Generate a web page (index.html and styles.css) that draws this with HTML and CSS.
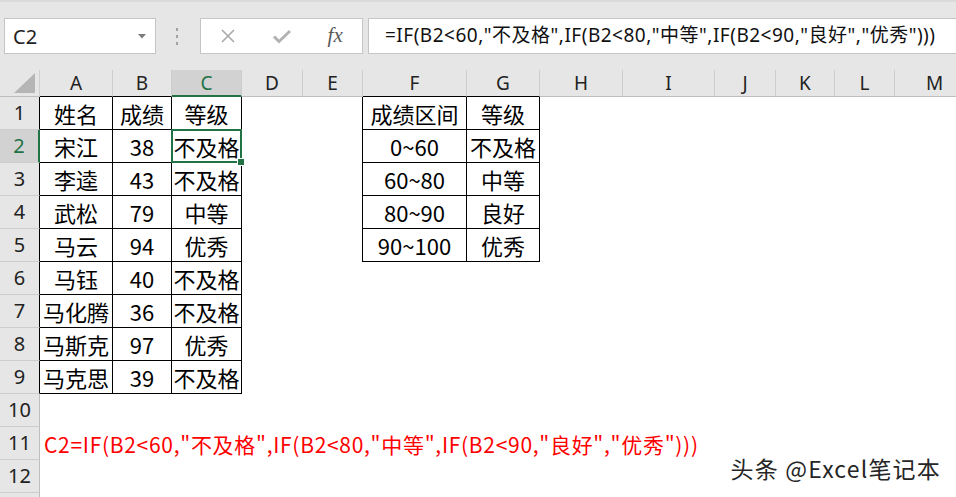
FILE: index.html
```html
<!DOCTYPE html>
<html lang="zh-CN">
<head>
  <meta charset="UTF-8" />
  <title>IF 函数 成绩等级</title>
  <link rel="stylesheet" href="styles.css">
</head>
<body>
  <div class="page">
    <div class="toolbar">
      <div class="namebox">
        <span>C2</span>
        <svg class="caret" width="8" height="5" viewBox="0 0 8 5"><path d="M0 0h8L4 4.5z" fill="#7b7b7b"/></svg>
      </div>
      <div class="grip"><i></i><i></i><i></i></div>
      <div class="fxbtns">
        <span class="fxbtn">
          <svg width="16" height="16" viewBox="0 0 16 16"><path d="M2 2l12 12M14 2L2 14" stroke="#a9a9a9" stroke-width="1.6" fill="none"/></svg>
        </span>
        <span class="fxbtn">
          <svg width="20" height="16" viewBox="0 0 20 16"><path d="M2 8.5l5 5L18 3" stroke="#b3b3b3" stroke-width="3" fill="none"/></svg>
        </span>
        <span class="fxbtn fx">fx</span>
      </div>
      <div class="formula">=IF(B2&lt;60,"不及格",IF(B2&lt;80,"中等",IF(B2&lt;90,"良好","优秀")))</div>
    </div>

    <table class="sheet">
      <colgroup>
        <col style="width:40px"><col style="width:73px"><col style="width:59px"><col style="width:70px">
        <col style="width:61px"><col style="width:60px"><col style="width:104px"><col style="width:73px">
        <col style="width:83px"><col style="width:92px"><col style="width:61px"><col style="width:59px">
        <col style="width:60px"><col style="width:80px">
      </colgroup>
      <tr class="hdr">
        <th class="corner"><svg width="21" height="20" viewBox="0 0 21 20"><path d="M21 0V20H0z" fill="#b5b5b5"/></svg></th>
        <th class="ch top">A</th><th class="ch top">B</th><th class="ch sel">C</th>
        <th class="ch">D</th><th class="ch">E</th><th class="ch top">F</th><th class="ch top">G</th>
        <th class="ch">H</th><th class="ch">I</th><th class="ch">J</th><th class="ch">K</th>
        <th class="ch">L</th><th class="ch">M</th>
      </tr>
      <tr>
        <th class="rh edge">1</th><td class="b">姓名</td><td class="b">成绩</td><td class="b">等级</td>
        <td></td><td class="bl"></td><td class="b">成绩区间</td><td class="b">等级</td>
      </tr>
      <tr>
        <th class="rh sel">2</th><td class="b">宋江</td><td class="b">38</td>
        <td class="b active">不及格<span class="cursor"><i></i></span></td>
        <td></td><td class="bl"></td><td class="b">0~60</td><td class="b">不及格</td>
      </tr>
      <tr>
        <th class="rh edge">3</th><td class="b">李逵</td><td class="b">43</td><td class="b">不及格</td>
        <td></td><td class="bl"></td><td class="b">60~80</td><td class="b">中等</td>
      </tr>
      <tr>
        <th class="rh edge">4</th><td class="b">武松</td><td class="b">79</td><td class="b">中等</td>
        <td></td><td class="bl"></td><td class="b">80~90</td><td class="b">良好</td>
      </tr>
      <tr>
        <th class="rh edge">5</th><td class="b">马云</td><td class="b">94</td><td class="b">优秀</td>
        <td></td><td class="bl"></td><td class="b">90~100</td><td class="b">优秀</td>
      </tr>
      <tr>
        <th class="rh edge">6</th><td class="b">马钰</td><td class="b">40</td><td class="b">不及格</td>
      </tr>
      <tr>
        <th class="rh edge">7</th><td class="b">马化腾</td><td class="b">36</td><td class="b">不及格</td>
      </tr>
      <tr>
        <th class="rh edge">8</th><td class="b">马斯克</td><td class="b">97</td><td class="b">优秀</td>
      </tr>
      <tr>
        <th class="rh edge">9</th><td class="b">马克思</td><td class="b">39</td><td class="b">不及格</td>
      </tr>
      <tr>
        <th class="rh">10</th><td></td>
      </tr>
      <tr>
        <th class="rh">11</th><td class="note">C2=IF(B2&lt;60,"不及格",IF(B2&lt;80,"中等",IF(B2&lt;90,"良好","优秀")))</td>
      </tr>
      <tr>
        <th class="rh">12</th><td></td>
      </tr>
      <tr>
        <th class="rh"></th><td></td>
      </tr>
    </table>

    <div class="watermark">头条 @Excel笔记本</div>
  </div>
</body>
</html>
```

FILE: styles.css
```css
body {
  margin: 0;
  background: #fff;
  font-family: "Noto Sans CJK SC", sans-serif;
}
.page {
  position: relative;
  width: 956px;
  height: 497px;
  overflow: hidden;
}

/* formula bar */
.toolbar {
  display: flex;
  align-items: flex-start;
  height: 70px;
  box-sizing: border-box;
  padding-top: 16px;
  background: #e6e6e6;
  border-top: 2px solid #dadada;
}
.namebox {
  display: flex;
  align-items: center;
  justify-content: space-between;
  width: 152px;
  height: 36px;
  box-sizing: border-box;
  margin-left: 4px;
  padding: 0 9px 0 8px;
  background: #fff;
  border: 1px solid #c6c6c6;
  font-family: "Noto Sans", sans-serif;
  font-size: 20px;
  color: #222;
}
.grip {
  display: flex;
  flex-direction: column;
  gap: 4px;
  margin: 10px 0 0 20px;
}
.grip i {
  display: block;
  width: 2px;
  height: 3px;
  background: #a3a3a3;
}
.fxbtns {
  display: flex;
  align-items: center;
  width: 163px;
  height: 36px;
  box-sizing: border-box;
  margin-left: 22px;
  background: #fff;
  border: 1px solid #c6c6c6;
}
.fxbtn {
  display: flex;
  align-items: center;
  justify-content: center;
  width: 54px;
  height: 34px;
}
.fx {
  font-family: "Liberation Serif", serif;
  font-style: italic;
  font-size: 21px;
  color: #5a5a5a;
  padding-bottom: 2px;
}
.formula {
  flex: 1;
  height: 36px;
  box-sizing: border-box;
  margin-left: 5px;
  margin-right: -10px;
  padding-left: 16px;
  background: #fff;
  border: 1px solid #c6c6c6;
  font-family: "Noto Sans", "Noto Sans CJK SC", sans-serif;
  font-size: 19px;
  letter-spacing: 0.5px;
  line-height: 33px;
  color: #111;
  white-space: nowrap;
}

/* sheet grid */
.sheet {
  table-layout: fixed;
  width: 975px;
  border-collapse: separate;
  border-spacing: 0;
}
.sheet th,
.sheet td {
  padding: 0;
  box-sizing: border-box;
  text-align: center;
  vertical-align: middle;
  white-space: nowrap;
}
.sheet tr {
  height: 33px;
}
.sheet tr.hdr {
  height: 27px;
}
.sheet th {
  font-family: "Noto Sans", sans-serif;
  font-weight: 400;
  color: #222;
  background: #e6e6e6;
}
.corner {
  border-right: 1px solid #cfcfcf;
  border-bottom: 1px solid #bdbdbd;
  text-align: right !important;
  vertical-align: bottom !important;
}
.corner svg {
  display: block;
  margin: 0 4px 3px auto;
}
.ch {
  font-size: 19px;
  line-height: 24px;
  border-right: 1px solid #cdcdcd;
  border-bottom: 1px solid #bdbdbd;
}
.ch.top {
  border-bottom-color: #000;
}
.ch.sel {
  background: #d2d2d2;
  color: #217346;
  border-bottom: 2px solid #217346;
}
.rh {
  font-size: 20px;
  line-height: 24px;
  border-right: 1px solid #bdbdbd;
  border-bottom: 1px solid #cdcdcd;
}
.rh.edge {
  border-right-color: #000;
}
.rh.sel {
  background: #d2d2d2;
  color: #217346;
  border-right: 2px solid #217346;
}

/* cells */
.sheet td {
  font-size: 22px;
  line-height: 26px;
  color: #000;
}
.sheet td.b {
  border-right: 1px solid #000;
  border-bottom: 1px solid #000;
}
.sheet td.bl {
  border-right: 1px solid #000;
}
.active {
  position: relative;
}
.cursor {
  position: absolute;
  top: -1px;
  left: -1px;
  right: -1px;
  bottom: -1px;
  border: 2px solid #217346;
}
.cursor i {
  position: absolute;
  right: -5px;
  bottom: -5px;
  width: 6px;
  height: 6px;
  background: #217346;
  border: 1px solid #fff;
}
.sheet td.note {
  text-align: left;
  padding-left: 4px;
  font-size: 21px;
  letter-spacing: 0.7px;
  color: #ff0000;
  overflow: visible;
}

.watermark {
  position: absolute;
  right: 15px;
  bottom: 12px;
  font-size: 23px;
  letter-spacing: 1.2px;
  color: #262626;
  text-shadow: 1px 1px 0 #fff, -1px -1px 0 #fff, 1px -1px 0 #fff, -1px 1px 0 #fff;
}
```
